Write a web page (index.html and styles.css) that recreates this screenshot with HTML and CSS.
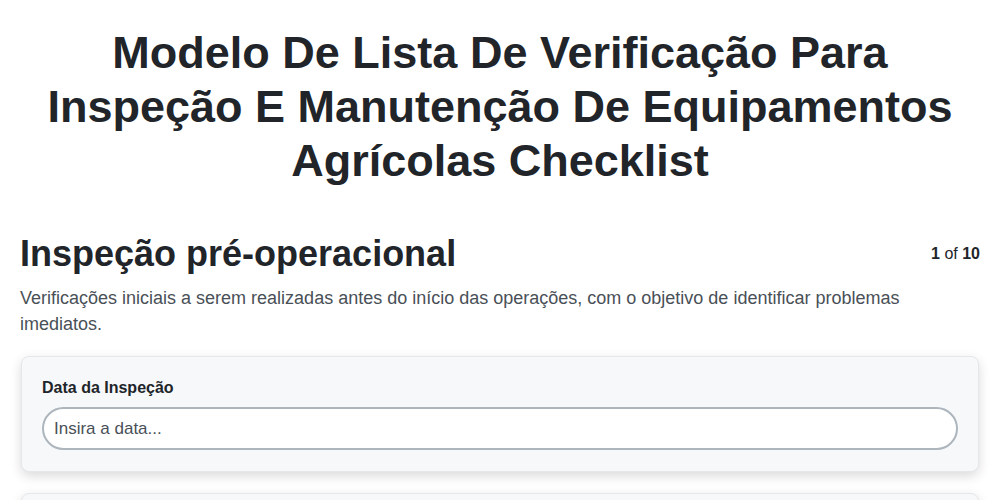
FILE: index.html
```html
<!DOCTYPE html>
<html lang="pt">
<head>
<meta charset="utf-8">
<link rel="stylesheet" href="styles.css">
</head>
<body>
<div class="page">
  <h1 class="title">Modelo De Lista De Verificação Para Inspeção E Manutenção De Equipamentos Agrícolas Checklist</h1>
  <div class="section-head">
    <h2 class="section-title">Inspeção pré-operacional</h2>
    <div class="counter"><b>1</b> of <b>10</b></div>
  </div>
  <p class="section-desc">Verificações iniciais a serem realizadas antes do início das operações, com o objetivo de identificar problemas imediatos.</p>
  <div class="card">
    <label class="field-label">Data da Inspeção</label>
    <input class="field-input" type="text" placeholder="Insira a data...">
  </div>
  <div class="card">
    <label class="field-label">Nome do Inspetor</label>
    <input class="field-input" type="text" placeholder="Insira o nome...">
  </div>
</div>
</body>
</html>
```
FILE: styles.css
```css
* { box-sizing: border-box; }
body {
  margin: 0;
  font-family: "Liberation Sans", Arial, sans-serif;
  color: #1f2328;
  background: #fff;
}
.page {
  padding: 26px 20px 20px;
}
.title {
  margin: 0 0 44px;
  text-align: center;
  font-size: 45px;
  line-height: 54px;
  font-weight: 700;
  color: #212529;
}
.section-head {
  display: flex;
  justify-content: space-between;
  align-items: center;
}
.section-title {
  margin: 0;
  font-size: 36px;
  line-height: 44px;
  font-weight: 700;
  color: #212529;
}
.counter {
  font-size: 16px;
  color: #212529;
}
.section-desc {
  margin: 9px 0 19px;
  font-size: 18px;
  line-height: 26px;
  color: #495057;
}
.card {
  background: #f7f8fa;
  border: 1px solid #e5e7eb;
  border-radius: 8px;
  box-shadow: 0 4px 12px rgba(0,0,0,0.15);
  padding: 21px 20px 21px;
  margin: 0 1px 21px;
  display: flex;
  flex-direction: column;
}
.field-label {
  font-size: 16px;
  font-weight: 700;
  color: #212529;
  line-height: 20px;
  margin-bottom: 9px;
}
.field-input {
  height: 43px;
  border: 2px solid #adb5bd;
  border-radius: 22px;
  background: #fff;
  padding: 0 10px;
  font-family: "Liberation Sans", Arial, sans-serif;
  font-size: 17px;
  color: #212529;
}
.field-input::placeholder { color: #495057; }
```
